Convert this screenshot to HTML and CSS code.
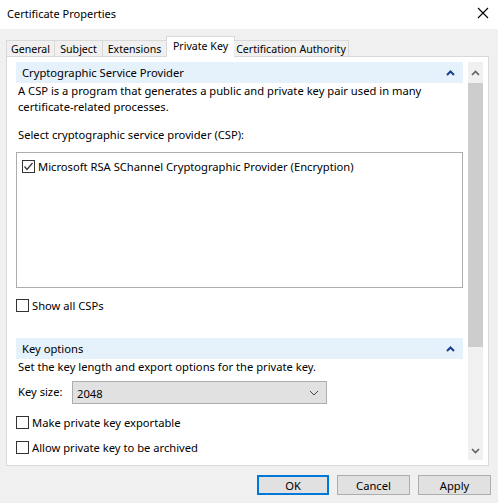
FILE: index.html
```html
<!DOCTYPE html>
<html>
<head>
<meta charset="utf-8">
<link rel="stylesheet" href="styles.css">
</head>
<body>
<div class="window">
  <div class="titlebar">
    <span class="title">Certificate Properties</span>
    <svg class="close" width="12" height="12" viewBox="0 0 12 12"><path d="M1 1 L11 11 M11 1 L1 11" stroke="#000" stroke-width="1.1" fill="none"/></svg>
  </div>
  <div class="tabs">
    <div class="tab">General</div>
    <div class="tab">Subject</div>
    <div class="tab">Extensions</div>
    <div class="tab active">Private Key</div>
    <div class="tab">Certification Authority</div>
  </div>
  <div class="panel">
    <div class="content">
      <div class="section-head">
        <span>Cryptographic Service Provider</span>
        <svg class="chev" width="9" height="6" viewBox="0 0 9 6"><path d="M1 5 L4.5 1.5 L8 5" stroke="#1a3e94" stroke-width="2" fill="none"/></svg>
      </div>
      <p class="desc">A CSP is a program that generates a public and private key pair used in many certificate-related processes.</p>
      <p class="label">Select cryptographic service provider (CSP):</p>
      <div class="listbox">
        <div class="check-row">
          <span class="box"><svg width="11" height="11" viewBox="0 0 11 11"><path d="M1.5 5.5 L4 8.5 L9.5 2" stroke="#333" stroke-width="1.2" fill="none"/></svg></span>
          <span>Microsoft RSA SChannel Cryptographic Provider (Encryption)</span>
        </div>
      </div>
      <div class="check-row show-all">
        <span class="box"></span><span>Show all CSPs</span>
      </div>
      <div class="section-head key-head">
        <span>Key options</span>
        <svg class="chev" width="9" height="6" viewBox="0 0 9 6"><path d="M1 5 L4.5 1.5 L8 5" stroke="#1a3e94" stroke-width="2" fill="none"/></svg>
      </div>
      <p class="desc">Set the key length and export options for the private key.</p>
      <div class="keysize">
        <span class="ks-label">Key size:</span>
        <div class="combo">
          <span>2048</span>
          <svg width="10" height="6" viewBox="0 0 10 6"><path d="M1 1 L5 5 L9 1" stroke="#444" stroke-width="1" fill="none"/></svg>
        </div>
      </div>
      <div class="check-row exportable">
        <span class="box"></span><span>Make private key exportable</span>
      </div>
      <div class="check-row archived">
        <span class="box"></span><span>Allow private key to be archived</span>
      </div>
    </div>
    <div class="scrollbar">
      <div class="sb-arrow"><svg width="9" height="6" viewBox="0 0 9 6"><path d="M1 5 L4.5 1.5 L8 5" stroke="#606060" stroke-width="1.6" fill="none"/></svg></div>
      <div class="sb-thumb"></div>
      <div class="sb-track"></div>
      <div class="sb-arrow down"><svg width="9" height="6" viewBox="0 0 9 6"><path d="M1 1 L4.5 4.5 L8 1" stroke="#606060" stroke-width="1.6" fill="none"/></svg></div>
    </div>
  </div>
  <div class="buttons">
    <div class="btn default">OK</div>
    <div class="btn">Cancel</div>
    <div class="btn">Apply</div>
  </div>
</div>
</body>
</html>
```
FILE: styles.css
```css
* { box-sizing: border-box; }
html, body { margin: 0; padding: 0; }
body {
  width: 498px;
  height: 503px;
  background: #f0f0f0;
  font-family: "Noto Sans", "Open Sans", sans-serif;
  font-size: 11.2px;
  color: #000;
  overflow: hidden;
}
.window { width: 498px; height: 503px; display: flex; flex-direction: column; }
.titlebar {
  height: 29px;
  background: #fff;
  display: flex;
  align-items: center;
  justify-content: space-between;
  padding: 0 9px 0 7px;
  font-size: 11px;
}
.title { position: relative; top: -1px; }
.close { position: relative; top: -2px; }
.tabs {
  display: flex;
  align-items: flex-end;
  padding-left: 6px;
  margin-top: 7px;
  height: 20px;
  position: relative;
  z-index: 2;
  white-space: nowrap;
  font-size: 10.6px;
}
.tab {
  height: 16px;
  border: 1px solid #d9d9d9;
  border-bottom: none;
  border-right: none;
  background: #f0f0f0;
  display: flex;
  align-items: center;
  justify-content: center;
  line-height: 14px;
  white-space: nowrap;
  padding-top: 1px;
}
.tab:nth-child(1) { width: 48px; }
.tab:nth-child(2) { width: 48px; }
.tab:nth-child(3) { width: 64px; }
.tab:nth-child(4) { width: 69px; }
.tab:nth-child(5) { width: 115px; border-right: 1px solid #d9d9d9; }
.tab.active {
  height: 21px;
  background: #fff;
  border-right: 1px solid #d9d9d9;
  margin-bottom: -1px;
  margin-right: -1px;
  padding: 0 0 3px;
}
.tab.active + .tab { border-left: none; }
.panel {
  margin: 0 9px 0 6px;
  height: 410px;
  background: #fff;
  border: 1px solid #d9d9d9;
  display: flex;
  padding: 5px 5px 5px 9px;
}
.content { flex: 1; margin-right: 5px; overflow: hidden; white-space: nowrap; }
.section-head {
  height: 21px;
  background: #e5f1fb;
  display: flex;
  align-items: center;
  justify-content: space-between;
  padding: 0 8px 0 6px;
}
.desc { margin: 0; padding-left: 2px; line-height: 16px; white-space: normal; }
.label { margin: 12px 0 0; padding-left: 2px; line-height: 16px; }
.listbox {
  margin-top: 9px;
  height: 136px;
  border: 1px solid #adadad;
  padding: 6px 5px;
}
.check-row { display: flex; align-items: center; gap: 3px; height: 14px; }
.box {
  width: 13px;
  height: 13px;
  border: 1px solid #333;
  background: #fff;
  display: flex;
  align-items: center;
  justify-content: center;
  flex: none;
}
.show-all { margin-top: 10px; }
.key-head { margin-top: 26px; }
.keysize { display: flex; align-items: center; margin-top: 6px; padding-left: 2px; }
.ks-label { width: 54px; position: relative; top: -1px; }
.combo {
  width: 255px;
  height: 23px;
  background: #e1e1e1;
  border: 1px solid #adadad;
  display: flex;
  align-items: center;
  justify-content: space-between;
  padding: 0 7px 0 4px;
}
.combo span { position: relative; top: 1px; }
.exportable { margin-top: 11px; }
.archived { margin-top: 11px; }
.scrollbar {
  width: 15px;
  background: #f0f0f0;
  display: flex;
  flex-direction: column;
}
.sb-arrow { height: 21px; display: flex; align-items: center; justify-content: center; }
.sb-arrow.down { height: 17px; align-items: flex-start; padding-top: 5px; }
.sb-thumb { height: 264px; background: #cdcdcd; }
.sb-track { flex: 1; }
.buttons {
  display: flex;
  justify-content: flex-end;
  gap: 8px;
  padding: 9px 7px 0 0;
}
.btn {
  width: 73px;
  height: 20px;
  background: #e1e1e1;
  border: 1px solid #adadad;
  display: flex;
  align-items: center;
  justify-content: center;
}
.btn.default { border: 2px solid #0078d7; width: 72px; }
```
